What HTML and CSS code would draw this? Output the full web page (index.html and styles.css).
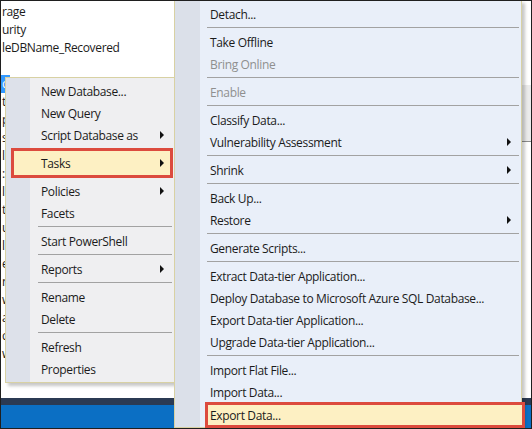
FILE: index.html
```html
<!DOCTYPE html>
<html lang="en">

<head>
    <meta charset="UTF-8" />
    <meta name="viewport" content="width=device-width, initial-scale=1.0" />
    <title>Object Explorer - Tasks</title>
    <link rel="stylesheet" href="styles.css">
</head>

<body>
    <div class="screen">
        <!-- Object Explorer behind the menus -->
        <div class="workspace">
            <ul class="tree">
                <li>rage</li>
                <li>urity</li>
                <li>leDBName_Recovered</li>
                <li></li>
                <li class="selected">c</li>
                <li>ta</li>
                <li>p</li>
                <li>s</li>
                <li>l</li>
                <li>:</li>
                <li>l</li>
                <li>t</li>
                <li>u</li>
                <li>l</li>
                <li>e</li>
                <li>n</li>
                <li>w</li>
                <li>a</li>
                <li>c</li>
                <li>w</li>
            </ul>
            <div class="side">
                <div class="side-block"></div>
            </div>
        </div>
        <div class="bar-dark"></div>
        <div class="bar-blue"></div>

        <!-- Database context menu -->
        <ul class="menu menu-db">
            <li class="item">New Database...</li>
            <li class="item">New Query</li>
            <li class="item">Script Database as <span class="arrow"></span></li>
            <li class="item hl">Tasks <span class="arrow"></span></li>
            <li class="item">Policies <span class="arrow"></span></li>
            <li class="item">Facets</li>
            <li class="sep"></li>
            <li class="item">Start PowerShell</li>
            <li class="sep"></li>
            <li class="item">Reports <span class="arrow"></span></li>
            <li class="sep"></li>
            <li class="item">Rename</li>
            <li class="item">Delete</li>
            <li class="sep"></li>
            <li class="item">Refresh</li>
            <li class="item">Properties</li>
        </ul>

        <!-- Tasks submenu -->
        <ul class="menu menu-tasks">
            <li class="item">Detach...</li>
            <li class="sep"></li>
            <li class="item">Take Offline</li>
            <li class="item disabled">Bring Online</li>
            <li class="sep"></li>
            <li class="item disabled">Enable</li>
            <li class="sep"></li>
            <li class="item">Classify Data...</li>
            <li class="item">Vulnerability Assessment <span class="arrow"></span></li>
            <li class="sep"></li>
            <li class="item">Shrink <span class="arrow"></span></li>
            <li class="sep"></li>
            <li class="item">Back Up...</li>
            <li class="item">Restore <span class="arrow"></span></li>
            <li class="sep"></li>
            <li class="item">Generate Scripts...</li>
            <li class="sep"></li>
            <li class="item">Extract Data-tier Application...</li>
            <li class="item">Deploy Database to Microsoft Azure SQL Database...</li>
            <li class="item">Export Data-tier Application...</li>
            <li class="item">Upgrade Data-tier Application...</li>
            <li class="sep"></li>
            <li class="item">Import Flat File...</li>
            <li class="item">Import Data...</li>
            <li class="item hl">Export Data...</li>
        </ul>
    </div>
</body>

</html>
```

FILE: styles.css
```css
* {
    box-sizing: border-box;
}

body {
    margin: 0;
    padding: 0;
    font-family: 'Open Sans', 'Noto Sans', sans-serif;
    font-size: 12px;
    letter-spacing: -0.35px;
    color: #1b1b1b;
    background: #ffffff;
}

.screen {
    position: relative;
    width: 532px;
    height: 429px;
    border: 1px solid #1f1f1f;
    overflow: hidden;
    display: flex;
    flex-direction: column;
    background: #ffffff;
}

/* Object Explorer */
.workspace {
    flex: 1;
    display: flex;
    min-height: 0;
}

.tree {
    flex: 1;
    list-style: none;
    margin: 0;
    padding: 2px 0 0 0;
    overflow: hidden;
}

.tree li {
    height: 18px;
    line-height: 18px;
    padding-left: 1px;
    white-space: nowrap;
}

.tree .selected {
    width: 9px;
    background: #3399ff;
    color: #ffffff;
    overflow: hidden;
}

.side {
    width: 9px;
    padding-top: 84px;
}

.side-block {
    height: 57px;
    background: #ebebeb;
    border-bottom: 1px solid #8c8c8c;
}

.bar-dark {
    height: 7px;
    background: #2b3a53;
}

.bar-blue {
    height: 23px;
    background: #0b6fc4;
}

/* Context menus */
.menu {
    position: absolute;
    list-style: none;
    margin: 0;
    padding: 2px 0;
    border: 1px solid #d8d1a3;
    box-shadow: 3px 3px 3px rgba(0, 0, 0, 0.22);
}

.menu-db {
    left: 4px;
    top: 76px;
    width: 170px;
    background: linear-gradient(to right, #dde1ea 24px, #efeff1 24px);
}

.menu-tasks {
    left: 173px;
    top: -1px;
    width: 348px;
    background: linear-gradient(to right, #dbe0e9 25px, #e9eff9 25px);
}

.item {
    height: 22px;
    display: flex;
    align-items: center;
    justify-content: space-between;
    padding: 0 10px 0 35px;
    white-space: nowrap;
}

.disabled {
    color: #8f8f8f;
}

.sep {
    height: 1px;
    margin: 2px 2px 3px 32px;
    background: #a2a2a2;
}

.arrow {
    width: 0;
    height: 0;
    border-left: 4px solid #111111;
    border-top: 4px solid transparent;
    border-bottom: 4px solid transparent;
}

.hl {
    background: #fdf0c3;
    border: 3px solid #dc4b3e;
}

.menu-db .hl {
    height: 30px;
    margin: 2px 1px 2px 5px;
    padding-left: 27px;
    padding-right: 6px;
}

.menu-tasks .hl {
    height: 26px;
    margin: -1px -4px -3px 30px;
    padding-left: 2px;
}
```
